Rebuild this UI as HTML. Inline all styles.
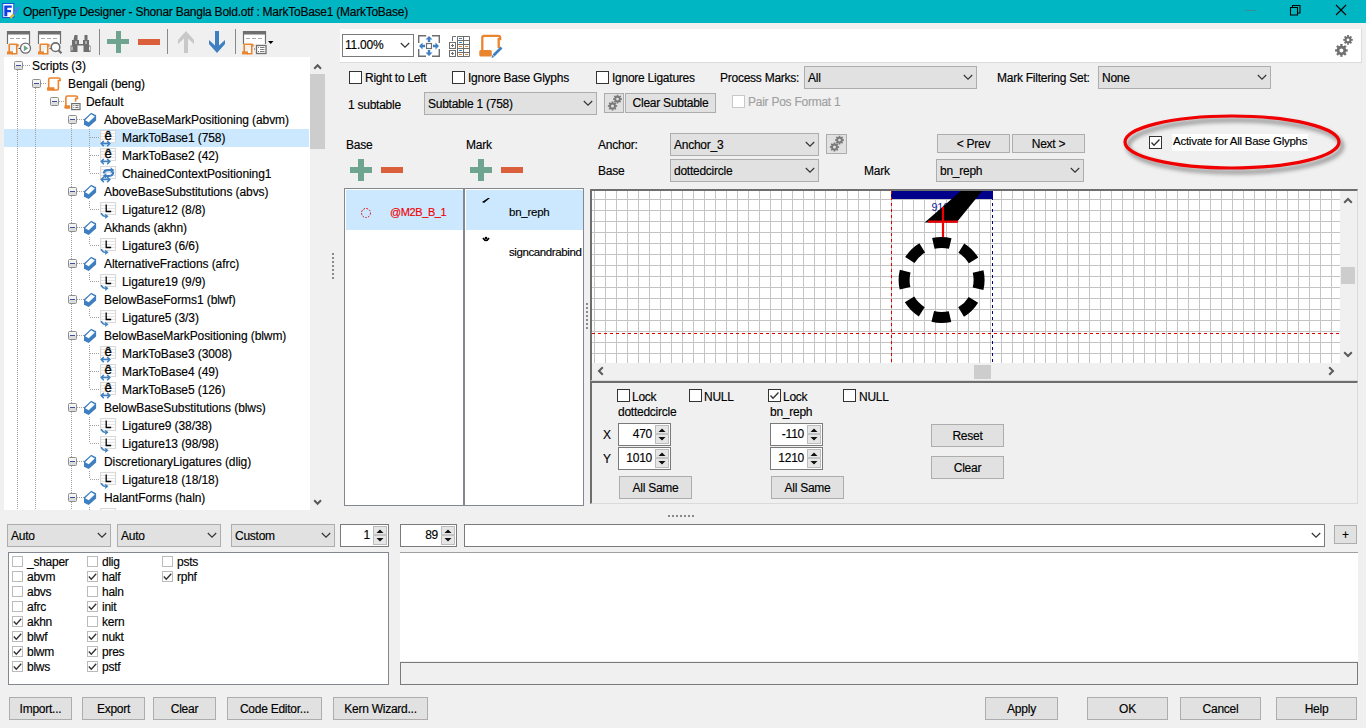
<!DOCTYPE html><html><head><meta charset="utf-8"><style>
html,body{margin:0;padding:0;width:1366px;height:728px;overflow:hidden;background:#f0f0f0;font-family:"Liberation Sans", sans-serif;font-size:12px;color:#000;position:relative}
.t{position:absolute;white-space:nowrap;line-height:16px;font-size:12px;letter-spacing:-0.25px;-webkit-text-stroke:0.15px currentColor}
</style></head><body>
<svg width="0" height="0" style="position:absolute"><defs>
<g id="exp"><rect x="0.5" y="0.5" width="8" height="8" rx="1" fill="#f4f4f4" stroke="#8e8e8e"/><rect x="1" y="5" width="7" height="3" fill="#dcdcdc"/><rect x="2" y="4" width="5" height="1" fill="#3b4fa0"/></g>
<g id="i_script"><path d="M2.7 14V4.5Q2.7 3 4.2 3H12.6Q14.2 3 14.2 4.5V5.5H12.4V13.5Q12.4 15 10.9 15H7" fill="none" stroke="#e9852f" stroke-width="1.6"/><rect x="1" y="12.3" width="7.5" height="3.4" rx="0.8" fill="#e9852f"/></g>
<g id="i_lang"><path d="M1.9 13V4.5Q1.9 3 3.4 3H11.6Q13.4 3 13.4 4.5V5.5H11.6V8.8" fill="none" stroke="#e9852f" stroke-width="1.6"/><rect x="0.4" y="12.3" width="5.8" height="3.4" rx="0.8" fill="#e9852f"/><rect x="7.7" y="10.6" width="8.3" height="6" fill="#fff" stroke="#6e6e6e" stroke-width="1.2"/><path d="M9.3 12.6h1M11.3 12.6h3.3M9.3 14.6h1M11.3 14.6h3.3" stroke="#6e6e6e" stroke-width="1"/></g>
<g id="i_feat"><path d="M7.2 1.8 L12.1 4.3 L12.1 9.5 L4.7 16 L0 13.7 L0 8.2Z" fill="#3d7fc0"/><path d="M7.2 3.3 L10.8 5.4 L4.7 11.3 L1.1 9.3Z" fill="#fff"/></g>
<g id="i_m2b"><rect x="0.6" y="1.6" width="15" height="11.8" fill="#fff"/><path d="M1 4.5h14.5M1 7.4h14.5M1 10.3h14.5" stroke="#e2e2e2"/><rect x="0.6" y="1.6" width="15" height="11.8" fill="none" stroke="#d6d6d6"/><text x="4.6" y="10.9" font-family="Liberation Sans" font-size="13" fill="#000" stroke="#000" stroke-width="0.35">ê</text><path d="M1.2 14.6h8.6 M3.8 12 L1.2 14.6 L3.8 17.2 M7.2 12 L9.8 14.6 L7.2 17.2" fill="none" stroke="#3d7fc0" stroke-width="1.5"/></g>
<g id="i_lig"><rect x="0.6" y="1.6" width="15" height="11.8" fill="#fff"/><path d="M1 4.5h14.5M1 7.4h14.5M1 10.3h14.5" stroke="#e2e2e2"/><rect x="0.6" y="1.6" width="15" height="11.8" fill="none" stroke="#d6d6d6"/><path d="M6.2 3.5v7h5" fill="none" stroke="#000" stroke-width="1.3"/><path d="M1.5 12 Q2 15.3 5.5 15.3" fill="none" stroke="#3d7fc0" stroke-width="1.6"/><path d="M8.5 15.3l-3.3-2.6v5.2z" fill="#3d7fc0"/></g>
<g id="i_chain"><rect x="0.6" y="1.6" width="15" height="11.8" fill="#fff"/><path d="M1 4.5h14.5M1 7.4h14.5M1 10.3h14.5" stroke="#e2e2e2"/><rect x="0.6" y="1.6" width="15" height="11.8" fill="none" stroke="#d6d6d6"/><path d="M4 8.5 Q4 5.2 8 5.2 H11" fill="none" stroke="#3d7fc0" stroke-width="2.2"/><path d="M14.3 5.2l-3.6-3v6z" fill="#3d7fc0"/><path d="M13 6.5 Q13.5 11 9 11 H6" fill="none" stroke="#3d7fc0" stroke-width="2.2"/><path d="M2.7 11l3.6-3v6z" fill="#3d7fc0"/><path d="M1.2 14.6h8.6 M3.8 12 L1.2 14.6 L3.8 17.2 M7.2 12 L9.8 14.6 L7.2 17.2" fill="none" stroke="#3d7fc0" stroke-width="1.5"/></g>
<g id="i_fit"><path d="M0.7 8V0.7h7.5M14 0.7h7.3v7.3M21.3 14v7.3H14M8 21.3H0.7V14" fill="none" stroke="#6e6e6e" stroke-width="1.4"/><rect x="8.5" y="8.5" width="5" height="5" fill="none" stroke="#6e6e6e" stroke-width="1.2"/><path d="M11 1l-3.5 3.5h2.3v2.5h2.4v-2.5h2.3z M11 21l-3.5-3.5h2.3v-2.5h2.4v2.5h2.3z M1 11l3.5-3.5v2.3h2.5v2.4h-2.5v2.3z M21 11l-3.5-3.5v2.3h-2.5v2.4h2.5v2.3z" fill="#3d7fc0"/></g>
<g id="i_grid"><path d="M4.5 6V1.5H8" fill="none" stroke="#6e6e6e" stroke-width="1"/><rect x="1.5" y="7.5" width="6" height="6" fill="#fff" stroke="#6e6e6e"/><rect x="1.5" y="15.5" width="6" height="6" fill="#fff" stroke="#6e6e6e"/><path d="M4.5 9v3M3 10.5h3M4.5 17v3M3 18.5h3" stroke="#6e6e6e" stroke-width="1"/><path d="M9.5 1.5h12v20h-12z M9.5 5.5h12M9.5 9.5h12M9.5 13.5h12M9.5 17.5h12M15.5 1.5v20" fill="none" stroke="#6e6e6e" stroke-width="1"/><path d="M11 3.5h3M11 7.5h3M11 15.5h3" stroke="#3d7fc0" stroke-width="1"/><path d="M11 11.5h3M17 11.5h3M11 19.5h3M17 19.5h3" stroke="#e9852f" stroke-width="1"/></g>
<g id="i_edit"><path d="M3.3 16.5V3.5Q3.3 1.8 5 1.8H19.2Q21.2 1.8 21.2 3.8V5.2H19.7V14" fill="none" stroke="#e9852f" stroke-width="2.3"/><rect x="0.3" y="16" width="12.5" height="6.5" rx="1.5" fill="#e9852f"/><path d="M14.5 21.5 L22.5 13.5" stroke="#3d7fc0" stroke-width="2.6"/><path d="M12.5 24 L13.2 21 L15.3 23.1Z" fill="#3d7fc0"/></g>
<g id="i_gears"><path d="M12.08 15.35 L13.68 15.14 L13.68 17.66 L12.08 17.45 L11.45 18.97 L12.73 19.95 L10.95 21.73 L9.97 20.45 L8.45 21.08 L8.66 22.68 L6.14 22.68 L6.35 21.08 L4.83 20.45 L3.85 21.73 L2.07 19.95 L3.35 18.97 L2.72 17.45 L1.12 17.66 L1.12 15.14 L2.72 15.35 L3.35 13.83 L2.07 12.85 L3.85 11.07 L4.83 12.35 L6.35 11.72 L6.14 10.12 L8.66 10.12 L8.45 11.72 L9.97 12.35 L10.95 11.07 L12.73 12.85 L11.45 13.83Z M9.4 16.4 A2.0 2.0 0 1 0 5.4 16.4 A2.0 2.0 0 1 0 9.4 16.4Z" fill="#707070" fill-rule="evenodd"/><path d="M17.51 5.11 L18.80 4.94 L18.80 6.86 L17.51 6.69 L17.04 7.83 L18.08 8.62 L16.72 9.98 L15.93 8.94 L14.79 9.41 L14.96 10.70 L13.04 10.70 L13.21 9.41 L12.07 8.94 L11.28 9.98 L9.92 8.62 L10.96 7.83 L10.49 6.69 L9.20 6.86 L9.20 4.94 L10.49 5.11 L10.96 3.97 L9.92 3.18 L11.28 1.82 L12.07 2.86 L13.21 2.39 L13.04 1.10 L14.96 1.10 L14.79 2.39 L15.93 2.86 L16.72 1.82 L18.08 3.18 L17.04 3.97Z M15.4 5.9 A1.4 1.4 0 1 0 12.6 5.9 A1.4 1.4 0 1 0 15.4 5.9Z" fill="#707070" fill-rule="evenodd"/></g>
<g id="i_gear2"><path d="M11.01 11.21 L12.11 11.08 L12.11 12.92 L11.01 12.79 L10.54 13.93 L11.41 14.61 L10.11 15.91 L9.43 15.04 L8.29 15.51 L8.42 16.61 L6.58 16.61 L6.71 15.51 L5.57 15.04 L4.89 15.91 L3.59 14.61 L4.46 13.93 L3.99 12.79 L2.89 12.92 L2.89 11.08 L3.99 11.21 L4.46 10.07 L3.59 9.39 L4.89 8.09 L5.57 8.96 L6.71 8.49 L6.58 7.39 L8.42 7.39 L8.29 8.49 L9.43 8.96 L10.11 8.09 L11.41 9.39 L10.54 10.07Z M9.0 12 A1.5 1.5 0 1 0 6.0 12 A1.5 1.5 0 1 0 9.0 12Z" fill="#7a7a7a" fill-rule="evenodd"/><path d="M15.82 4.36 L16.91 4.22 L16.91 5.98 L15.82 5.84 L15.37 6.92 L16.25 7.59 L14.99 8.85 L14.32 7.97 L13.24 8.42 L13.38 9.51 L11.62 9.51 L11.76 8.42 L10.68 7.97 L10.01 8.85 L8.75 7.59 L9.63 6.92 L9.18 5.84 L8.09 5.98 L8.09 4.22 L9.18 4.36 L9.63 3.28 L8.75 2.61 L10.01 1.35 L10.68 2.23 L11.76 1.78 L11.62 0.69 L13.38 0.69 L13.24 1.78 L14.32 2.23 L14.99 1.35 L16.25 2.61 L15.37 3.28Z M13.9 5.1 A1.4 1.4 0 1 0 11.1 5.1 A1.4 1.4 0 1 0 13.9 5.1Z" fill="#7a7a7a" fill-rule="evenodd"/></g>
<g id="i_win"><rect x="1.5" y="0.5" width="22" height="12.5" fill="#fff"/><path d="M1.5 13V0.5H23.5V13" fill="none" stroke="#6e6e6e" stroke-width="1.2"/><rect x="1" y="0" width="23" height="3.5" fill="#6e6e6e"/><path d="M4 7.5h4M10 7.5h4M16 7.5h4" stroke="#a8a8a8" stroke-width="1.1"/></g>
<g id="i_scroll"><path d="M2.2 1.2h7.5v1.5h1.2v-1.5 M2.2 1.2v8.5 M9.7 1.2v9.6h-5" fill="#fff" stroke="#e9852f" stroke-width="1.6"/><rect x="0" y="8.4" width="6" height="3" fill="#e9852f"/></g>
</defs></svg>
<div style="position:absolute;left:0px;top:0px;width:1366px;height:23px;background:#00b6c3"></div>
<svg style="position:absolute;left:2px;top:3px" width="18" height="16"><rect x="0.8" y="0.5" width="11" height="14" fill="#fff" stroke="#1a4fd8" stroke-width="1"/><path d="M2.3 2.5h7.5v2.2H5.3v2.3h3.7v2.2H5.3v4H2.3z" fill="#0b3fe0"/><path d="M9 14.5 L12 11 L17 4" stroke="#4a7fe8" stroke-width="2.2"/><path d="M8.5 15 L11.5 11.5" stroke="#e8c020" stroke-width="2.2"/></svg>
<div class="t" style="left:23px;top:4px;color:#000">OpenType Designer - Shonar Bangla Bold.otf : MarkToBase1 (MarkToBase)</div>
<div style="position:absolute;left:1245px;top:10px;width:11px;height:1px;background:#3a8c94"></div>
<svg style="position:absolute;left:1289px;top:4px" width="13" height="13" viewBox="0 0 13 13"><path d="M1.5 3.5h7v7.5h-7z M3.5 3.5V1.5h7.5v7.5H8.5" fill="none" stroke="#000" stroke-width="1.1"/></svg>
<svg style="position:absolute;left:1335px;top:4px" width="13" height="13" viewBox="0 0 13 13"><path d="M1 1L11 11M11 1L1 11" fill="none" stroke="#000" stroke-width="1.1"/></svg>
<svg style="position:absolute;left:6px;top:31px" width="26" height="24"><use href="#i_win"/><g transform="translate(1,12)"><use href="#i_scroll"/></g><path d="M12.5 17.5h2" stroke="#555"/><circle cx="19.5" cy="17.2" r="5" fill="#fff" stroke="#6e6e6e" stroke-width="1.3"/><path d="M17.8 14.3v6l4.6-3z" fill="#6ba58f"/></svg>
<svg style="position:absolute;left:37px;top:31px" width="26" height="24"><use href="#i_win"/><g transform="translate(1,12)"><use href="#i_scroll"/></g><path d="M12.5 17.5h2" stroke="#555"/><circle cx="18.5" cy="16.2" r="4.3" fill="#fff" stroke="#6e6e6e" stroke-width="1.6"/><path d="M21.5 19.3l3 3" stroke="#6e6e6e" stroke-width="2.2"/></svg>
<svg style="position:absolute;left:70px;top:34px" width="22" height="19"><path d="M4.5 1h3v5h1.5v4h4v-4h1.5v-5h3v5h1.5v5.5h1.5v6.5h-7v-6.5h-6v6.5h-7v-6.5h1.5v-5.5h1.5z" fill="#6e6e6e"/><path d="M2 12.5v4M19.5 12.5v4M6 7v3M16 7v3" stroke="#fff" stroke-width="0.9"/></svg>
<div style="position:absolute;left:99px;top:29px;width:1px;height:26px;background:#888"></div>
<svg style="position:absolute;left:177px;top:30px" width="18" height="24"><path d="M9 1 L17 10 L17 14 L11 8.5 V23 H7 V8.5 L1 14 L1 10 Z" fill="#c8c8c8"/></svg>
<svg style="position:absolute;left:208px;top:30px" width="18" height="24"><path d="M9 23 L17 14 L17 10 L11 15.5 V1 H7 V15.5 L1 10 L1 14 Z" fill="#3d7fc0"/></svg>
<svg style="position:absolute;left:242px;top:31px" width="34" height="24"><use href="#i_win"/><g transform="translate(0,12)"><use href="#i_scroll"/></g><path d="M12 18h1" stroke="#555"/><rect x="14.5" y="14.5" width="9.5" height="8" fill="#fff" stroke="#6e6e6e" stroke-width="1.3"/><path d="M16 16.5h1M18 16.5h4.5M18 18.5h4.5M16 20.5h1M18 20.5h4.5" stroke="#6e6e6e" stroke-width="0.9"/><path d="M26 10h5.5l-2.75 3z" fill="#000"/></svg>
<div style="position:absolute;left:107px;top:39px;width:22px;height:5px;background:#6fa590"></div>
<div style="position:absolute;left:115.5px;top:31px;width:5px;height:22px;background:#6fa590"></div>
<div style="position:absolute;left:138px;top:39px;width:22px;height:6px;background:#dc5f3c"></div>
<div style="position:absolute;left:167px;top:29px;width:1px;height:25px;background:#888"></div>
<div style="position:absolute;left:235px;top:29px;width:1px;height:25px;background:#888"></div>
<div style="position:absolute;left:4px;top:57px;width:306px;height:453px;background:#fff"></div>
<div style="position:absolute;left:310px;top:57px;width:16px;height:453px;background:#f0f0f0"></div>
<div style="position:absolute;left:4px;top:57px;width:306px;height:453px;overflow:hidden">
<div style="position:absolute;left:0px;top:72px;width:305px;height:18px;background:#cce8ff"></div>
<div style="position:absolute;left:13px;top:13px;width:1px;height:440px;background:repeating-linear-gradient(to bottom,#a0a0a0 0 1px,transparent 1px 2px)"></div>
<div style="position:absolute;left:31px;top:31px;width:1px;height:422px;background:repeating-linear-gradient(to bottom,#a0a0a0 0 1px,transparent 1px 2px)"></div>
<div style="position:absolute;left:67px;top:67px;width:1px;height:386px;background:repeating-linear-gradient(to bottom,#a0a0a0 0 1px,transparent 1px 2px)"></div>
<div style="position:absolute;left:19px;top:8px;width:8px;height:1px;background:repeating-linear-gradient(to right,#a0a0a0 0 1px,transparent 1px 2px)"></div>
<svg style="position:absolute;left:10px;top:4px" width="9" height="9"><use href="#exp"/></svg>
<div class="t" style="left:28px;top:1px;letter-spacing:-0.08px">Scripts (3)</div>
<div style="position:absolute;left:37px;top:26px;width:5px;height:1px;background:repeating-linear-gradient(to right,#a0a0a0 0 1px,transparent 1px 2px)"></div>
<svg style="position:absolute;left:28px;top:22px" width="9" height="9"><use href="#exp"/></svg>
<svg style="position:absolute;left:42px;top:18px" width="18" height="18"><use href="#i_script"/></svg>
<div class="t" style="left:64px;top:19px;letter-spacing:-0.08px">Bengali (beng)</div>
<div style="position:absolute;left:55px;top:44px;width:5px;height:1px;background:repeating-linear-gradient(to right,#a0a0a0 0 1px,transparent 1px 2px)"></div>
<svg style="position:absolute;left:46px;top:40px" width="9" height="9"><use href="#exp"/></svg>
<svg style="position:absolute;left:60px;top:36px" width="18" height="18"><use href="#i_lang"/></svg>
<div class="t" style="left:82px;top:37px;letter-spacing:-0.08px">Default</div>
<div style="position:absolute;left:73px;top:62px;width:7px;height:1px;background:repeating-linear-gradient(to right,#a0a0a0 0 1px,transparent 1px 2px)"></div>
<svg style="position:absolute;left:64px;top:58px" width="9" height="9"><use href="#exp"/></svg>
<svg style="position:absolute;left:80px;top:54px" width="18" height="18"><use href="#i_feat"/></svg>
<div class="t" style="left:100px;top:55px;letter-spacing:-0.08px">AboveBaseMarkPositioning (abvm)</div>
<div style="position:absolute;left:85px;top:72px;width:1px;height:18px;background:repeating-linear-gradient(to bottom,#a0a0a0 0 1px,transparent 1px 2px)"></div>
<div style="position:absolute;left:86px;top:80px;width:10px;height:1px;background:repeating-linear-gradient(to right,#a0a0a0 0 1px,transparent 1px 2px)"></div>
<svg style="position:absolute;left:96px;top:72px" width="18" height="18"><use href="#i_m2b"/></svg>
<div class="t" style="left:118px;top:73px;letter-spacing:-0.08px">MarkToBase1 (758)</div>
<div style="position:absolute;left:85px;top:90px;width:1px;height:18px;background:repeating-linear-gradient(to bottom,#a0a0a0 0 1px,transparent 1px 2px)"></div>
<div style="position:absolute;left:86px;top:98px;width:10px;height:1px;background:repeating-linear-gradient(to right,#a0a0a0 0 1px,transparent 1px 2px)"></div>
<svg style="position:absolute;left:96px;top:90px" width="18" height="18"><use href="#i_m2b"/></svg>
<div class="t" style="left:118px;top:91px;letter-spacing:-0.08px">MarkToBase2 (42)</div>
<div style="position:absolute;left:85px;top:108px;width:1px;height:8px;background:repeating-linear-gradient(to bottom,#a0a0a0 0 1px,transparent 1px 2px)"></div>
<div style="position:absolute;left:86px;top:116px;width:10px;height:1px;background:repeating-linear-gradient(to right,#a0a0a0 0 1px,transparent 1px 2px)"></div>
<svg style="position:absolute;left:96px;top:108px" width="18" height="18"><use href="#i_chain"/></svg>
<div class="t" style="left:118px;top:109px;letter-spacing:-0.08px">ChainedContextPositioning1</div>
<div style="position:absolute;left:73px;top:134px;width:7px;height:1px;background:repeating-linear-gradient(to right,#a0a0a0 0 1px,transparent 1px 2px)"></div>
<svg style="position:absolute;left:64px;top:130px" width="9" height="9"><use href="#exp"/></svg>
<svg style="position:absolute;left:80px;top:126px" width="18" height="18"><use href="#i_feat"/></svg>
<div class="t" style="left:100px;top:127px;letter-spacing:-0.08px">AboveBaseSubstitutions (abvs)</div>
<div style="position:absolute;left:85px;top:144px;width:1px;height:8px;background:repeating-linear-gradient(to bottom,#a0a0a0 0 1px,transparent 1px 2px)"></div>
<div style="position:absolute;left:86px;top:152px;width:10px;height:1px;background:repeating-linear-gradient(to right,#a0a0a0 0 1px,transparent 1px 2px)"></div>
<svg style="position:absolute;left:96px;top:144px" width="18" height="18"><use href="#i_lig"/></svg>
<div class="t" style="left:118px;top:145px;letter-spacing:-0.08px">Ligature12 (8/8)</div>
<div style="position:absolute;left:73px;top:170px;width:7px;height:1px;background:repeating-linear-gradient(to right,#a0a0a0 0 1px,transparent 1px 2px)"></div>
<svg style="position:absolute;left:64px;top:166px" width="9" height="9"><use href="#exp"/></svg>
<svg style="position:absolute;left:80px;top:162px" width="18" height="18"><use href="#i_feat"/></svg>
<div class="t" style="left:100px;top:163px;letter-spacing:-0.08px">Akhands (akhn)</div>
<div style="position:absolute;left:85px;top:180px;width:1px;height:8px;background:repeating-linear-gradient(to bottom,#a0a0a0 0 1px,transparent 1px 2px)"></div>
<div style="position:absolute;left:86px;top:188px;width:10px;height:1px;background:repeating-linear-gradient(to right,#a0a0a0 0 1px,transparent 1px 2px)"></div>
<svg style="position:absolute;left:96px;top:180px" width="18" height="18"><use href="#i_lig"/></svg>
<div class="t" style="left:118px;top:181px;letter-spacing:-0.08px">Ligature3 (6/6)</div>
<div style="position:absolute;left:73px;top:206px;width:7px;height:1px;background:repeating-linear-gradient(to right,#a0a0a0 0 1px,transparent 1px 2px)"></div>
<svg style="position:absolute;left:64px;top:202px" width="9" height="9"><use href="#exp"/></svg>
<svg style="position:absolute;left:80px;top:198px" width="18" height="18"><use href="#i_feat"/></svg>
<div class="t" style="left:100px;top:199px;letter-spacing:-0.08px">AlternativeFractions (afrc)</div>
<div style="position:absolute;left:85px;top:216px;width:1px;height:8px;background:repeating-linear-gradient(to bottom,#a0a0a0 0 1px,transparent 1px 2px)"></div>
<div style="position:absolute;left:86px;top:224px;width:10px;height:1px;background:repeating-linear-gradient(to right,#a0a0a0 0 1px,transparent 1px 2px)"></div>
<svg style="position:absolute;left:96px;top:216px" width="18" height="18"><use href="#i_lig"/></svg>
<div class="t" style="left:118px;top:217px;letter-spacing:-0.08px">Ligature19 (9/9)</div>
<div style="position:absolute;left:73px;top:242px;width:7px;height:1px;background:repeating-linear-gradient(to right,#a0a0a0 0 1px,transparent 1px 2px)"></div>
<svg style="position:absolute;left:64px;top:238px" width="9" height="9"><use href="#exp"/></svg>
<svg style="position:absolute;left:80px;top:234px" width="18" height="18"><use href="#i_feat"/></svg>
<div class="t" style="left:100px;top:235px;letter-spacing:-0.08px">BelowBaseForms1 (blwf)</div>
<div style="position:absolute;left:85px;top:252px;width:1px;height:8px;background:repeating-linear-gradient(to bottom,#a0a0a0 0 1px,transparent 1px 2px)"></div>
<div style="position:absolute;left:86px;top:260px;width:10px;height:1px;background:repeating-linear-gradient(to right,#a0a0a0 0 1px,transparent 1px 2px)"></div>
<svg style="position:absolute;left:96px;top:252px" width="18" height="18"><use href="#i_lig"/></svg>
<div class="t" style="left:118px;top:253px;letter-spacing:-0.08px">Ligature5 (3/3)</div>
<div style="position:absolute;left:73px;top:278px;width:7px;height:1px;background:repeating-linear-gradient(to right,#a0a0a0 0 1px,transparent 1px 2px)"></div>
<svg style="position:absolute;left:64px;top:274px" width="9" height="9"><use href="#exp"/></svg>
<svg style="position:absolute;left:80px;top:270px" width="18" height="18"><use href="#i_feat"/></svg>
<div class="t" style="left:100px;top:271px;letter-spacing:-0.08px">BelowBaseMarkPositioning (blwm)</div>
<div style="position:absolute;left:85px;top:288px;width:1px;height:18px;background:repeating-linear-gradient(to bottom,#a0a0a0 0 1px,transparent 1px 2px)"></div>
<div style="position:absolute;left:86px;top:296px;width:10px;height:1px;background:repeating-linear-gradient(to right,#a0a0a0 0 1px,transparent 1px 2px)"></div>
<svg style="position:absolute;left:96px;top:288px" width="18" height="18"><use href="#i_m2b"/></svg>
<div class="t" style="left:118px;top:289px;letter-spacing:-0.08px">MarkToBase3 (3008)</div>
<div style="position:absolute;left:85px;top:306px;width:1px;height:18px;background:repeating-linear-gradient(to bottom,#a0a0a0 0 1px,transparent 1px 2px)"></div>
<div style="position:absolute;left:86px;top:314px;width:10px;height:1px;background:repeating-linear-gradient(to right,#a0a0a0 0 1px,transparent 1px 2px)"></div>
<svg style="position:absolute;left:96px;top:306px" width="18" height="18"><use href="#i_m2b"/></svg>
<div class="t" style="left:118px;top:307px;letter-spacing:-0.08px">MarkToBase4 (49)</div>
<div style="position:absolute;left:85px;top:324px;width:1px;height:8px;background:repeating-linear-gradient(to bottom,#a0a0a0 0 1px,transparent 1px 2px)"></div>
<div style="position:absolute;left:86px;top:332px;width:10px;height:1px;background:repeating-linear-gradient(to right,#a0a0a0 0 1px,transparent 1px 2px)"></div>
<svg style="position:absolute;left:96px;top:324px" width="18" height="18"><use href="#i_m2b"/></svg>
<div class="t" style="left:118px;top:325px;letter-spacing:-0.08px">MarkToBase5 (126)</div>
<div style="position:absolute;left:73px;top:350px;width:7px;height:1px;background:repeating-linear-gradient(to right,#a0a0a0 0 1px,transparent 1px 2px)"></div>
<svg style="position:absolute;left:64px;top:346px" width="9" height="9"><use href="#exp"/></svg>
<svg style="position:absolute;left:80px;top:342px" width="18" height="18"><use href="#i_feat"/></svg>
<div class="t" style="left:100px;top:343px;letter-spacing:-0.08px">BelowBaseSubstitutions (blws)</div>
<div style="position:absolute;left:85px;top:360px;width:1px;height:18px;background:repeating-linear-gradient(to bottom,#a0a0a0 0 1px,transparent 1px 2px)"></div>
<div style="position:absolute;left:86px;top:368px;width:10px;height:1px;background:repeating-linear-gradient(to right,#a0a0a0 0 1px,transparent 1px 2px)"></div>
<svg style="position:absolute;left:96px;top:360px" width="18" height="18"><use href="#i_lig"/></svg>
<div class="t" style="left:118px;top:361px;letter-spacing:-0.08px">Ligature9 (38/38)</div>
<div style="position:absolute;left:85px;top:378px;width:1px;height:8px;background:repeating-linear-gradient(to bottom,#a0a0a0 0 1px,transparent 1px 2px)"></div>
<div style="position:absolute;left:86px;top:386px;width:10px;height:1px;background:repeating-linear-gradient(to right,#a0a0a0 0 1px,transparent 1px 2px)"></div>
<svg style="position:absolute;left:96px;top:378px" width="18" height="18"><use href="#i_lig"/></svg>
<div class="t" style="left:118px;top:379px;letter-spacing:-0.08px">Ligature13 (98/98)</div>
<div style="position:absolute;left:73px;top:404px;width:7px;height:1px;background:repeating-linear-gradient(to right,#a0a0a0 0 1px,transparent 1px 2px)"></div>
<svg style="position:absolute;left:64px;top:400px" width="9" height="9"><use href="#exp"/></svg>
<svg style="position:absolute;left:80px;top:396px" width="18" height="18"><use href="#i_feat"/></svg>
<div class="t" style="left:100px;top:397px;letter-spacing:-0.08px">DiscretionaryLigatures (dlig)</div>
<div style="position:absolute;left:85px;top:414px;width:1px;height:8px;background:repeating-linear-gradient(to bottom,#a0a0a0 0 1px,transparent 1px 2px)"></div>
<div style="position:absolute;left:86px;top:422px;width:10px;height:1px;background:repeating-linear-gradient(to right,#a0a0a0 0 1px,transparent 1px 2px)"></div>
<svg style="position:absolute;left:96px;top:414px" width="18" height="18"><use href="#i_lig"/></svg>
<div class="t" style="left:118px;top:415px;letter-spacing:-0.08px">Ligature18 (18/18)</div>
<div style="position:absolute;left:73px;top:440px;width:7px;height:1px;background:repeating-linear-gradient(to right,#a0a0a0 0 1px,transparent 1px 2px)"></div>
<svg style="position:absolute;left:64px;top:436px" width="9" height="9"><use href="#exp"/></svg>
<svg style="position:absolute;left:80px;top:432px" width="18" height="18"><use href="#i_feat"/></svg>
<div class="t" style="left:100px;top:433px;letter-spacing:-0.08px">HalantForms (haln)</div>
<div style="position:absolute;left:85px;top:450px;width:1px;height:8px;background:repeating-linear-gradient(to bottom,#a0a0a0 0 1px,transparent 1px 2px)"></div>
<div style="position:absolute;left:86px;top:458px;width:10px;height:1px;background:repeating-linear-gradient(to right,#a0a0a0 0 1px,transparent 1px 2px)"></div>
<svg style="position:absolute;left:96px;top:450px" width="18" height="18"><use href="#i_lig"/></svg>
</div>
<svg style="position:absolute;left:313px;top:63px" width="10" height="7"><path d="M1.2 5.8L4.6 2.2L8 5.8" fill="none" stroke="#5a5a5a" stroke-width="2"/></svg>
<div style="position:absolute;left:310px;top:74px;width:15px;height:75px;background:#cdcdcd"></div>
<svg style="position:absolute;left:313px;top:499px" width="10" height="7"><path d="M1.2 1.2L4.6 4.8L8 1.2" fill="none" stroke="#5a5a5a" stroke-width="2"/></svg>
<div style="position:absolute;left:340px;top:29px;width:1022px;height:34px;background:#fff;border-right:1px solid #dcdcdc;border-bottom:1px solid #dcdcdc;box-sizing:border-box"></div>
<div style="position:absolute;left:342px;top:34px;width:72px;height:23px;background:#fff;border:1px solid #7a7a7a;box-sizing:border-box"></div>
<div class="t" style="left:345px;top:37px;color:#000">11.00%</div>
<svg style="position:absolute;left:400px;top:42px" width="10" height="7" viewBox="0 0 10 7"><path d="M0.8 1 L5 5.2 L9.2 1" fill="none" stroke="#333" stroke-width="1.15"/></svg>
<svg style="position:absolute;left:418px;top:35px" width="23" height="23"><use href="#i_fit"/></svg>
<svg style="position:absolute;left:448px;top:35px" width="23" height="23"><use href="#i_grid"/></svg>
<svg style="position:absolute;left:479px;top:34px" width="25" height="25"><use href="#i_edit"/></svg>
<svg style="position:absolute;left:1334px;top:34px" width="22" height="24"><use href="#i_gears"/></svg>
<div style="position:absolute;left:349px;top:71px;width:13px;height:13px;background:#fff;border:1px solid #333;box-sizing:border-box"></div>
<div class="t" style="left:365px;top:70px;">Right to Left</div>
<div style="position:absolute;left:452px;top:71px;width:13px;height:13px;background:#fff;border:1px solid #333;box-sizing:border-box"></div>
<div class="t" style="left:468px;top:70px;">Ignore Base Glyphs</div>
<div style="position:absolute;left:596px;top:71px;width:13px;height:13px;background:#fff;border:1px solid #333;box-sizing:border-box"></div>
<div class="t" style="left:612px;top:70px;">Ignore Ligatures</div>
<div class="t" style="left:720px;top:70px;">Process Marks:</div>
<div style="position:absolute;left:804px;top:66px;width:173px;height:23px;background:#e1e1e1;border:1px solid #adadad;box-sizing:border-box"></div>
<div class="t" style="left:808px;top:70px;color:#000">All</div>
<svg style="position:absolute;left:963px;top:74px" width="10" height="7" viewBox="0 0 10 7"><path d="M0.8 1 L5 5.2 L9.2 1" fill="none" stroke="#333" stroke-width="1.15"/></svg>
<div class="t" style="left:997px;top:70px;">Mark Filtering Set:</div>
<div style="position:absolute;left:1098px;top:66px;width:173px;height:23px;background:#e1e1e1;border:1px solid #adadad;box-sizing:border-box"></div>
<div class="t" style="left:1102px;top:70px;color:#000">None</div>
<svg style="position:absolute;left:1257px;top:74px" width="10" height="7" viewBox="0 0 10 7"><path d="M0.8 1 L5 5.2 L9.2 1" fill="none" stroke="#333" stroke-width="1.15"/></svg>
<div class="t" style="left:348px;top:97px;">1 subtable</div>
<div style="position:absolute;left:424px;top:92px;width:173px;height:23px;background:#e1e1e1;border:1px solid #adadad;box-sizing:border-box"></div>
<div class="t" style="left:428px;top:96px;color:#000">Subtable 1 (758)</div>
<svg style="position:absolute;left:583px;top:100px" width="10" height="7" viewBox="0 0 10 7"><path d="M0.8 1 L5 5.2 L9.2 1" fill="none" stroke="#333" stroke-width="1.15"/></svg>
<div style="position:absolute;left:604px;top:93px;width:20px;height:20px;background:#e1e1e1;border:1px solid #adadad;box-sizing:border-box"></div>
<svg style="position:absolute;left:605px;top:94px" width="18" height="18"><use href="#i_gear2"/></svg>
<div style="position:absolute;left:625px;top:93px;width:91px;height:20px;background:#e1e1e1;border:1px solid #adadad;box-sizing:border-box"></div>
<div class="t" style="left:625px;top:95px;width:91px;text-align:center">Clear Subtable</div>
<div style="position:absolute;left:732px;top:95px;width:13px;height:13px;background:#fff;border:1px solid #c8c8c8;box-sizing:border-box"></div>
<div class="t" style="left:748px;top:94px;color:#a0a0a0">Pair Pos Format 1</div>
<div class="t" style="left:346px;top:137px;">Base</div>
<div class="t" style="left:466px;top:137px;">Mark</div>
<div style="position:absolute;left:350px;top:167px;width:22px;height:6px;background:#6fa590"></div>
<div style="position:absolute;left:358px;top:159px;width:6px;height:22px;background:#6fa590"></div>
<div style="position:absolute;left:381px;top:167px;width:22px;height:6px;background:#dc5f3c"></div>
<div style="position:absolute;left:470px;top:167px;width:22px;height:6px;background:#6fa590"></div>
<div style="position:absolute;left:478px;top:159px;width:6px;height:22px;background:#6fa590"></div>
<div style="position:absolute;left:501px;top:167px;width:22px;height:6px;background:#dc5f3c"></div>
<div style="position:absolute;left:344px;top:188px;width:120px;height:318px;background:#fff;border:1px solid #828790;box-sizing:border-box"></div>
<div style="position:absolute;left:464px;top:188px;width:120px;height:318px;background:#fff;border:1px solid #828790;box-sizing:border-box"></div>
<div style="position:absolute;left:346px;top:190px;width:117px;height:40px;background:#cce8ff"></div>
<div style="position:absolute;left:466px;top:190px;width:117px;height:40px;background:#cce8ff"></div>
<svg style="position:absolute;left:360px;top:207px" width="12" height="12"><circle cx="6" cy="6" r="4.5" fill="none" stroke="#e00000" stroke-width="1" stroke-dasharray="1.6 1.4"/></svg>
<div class="t" style="left:390px;top:204px;color:#f00000;font-size:11px;letter-spacing:-0.4px">@M2B_B_1</div>
<svg style="position:absolute;left:481px;top:196px" width="10" height="8"><path d="M1 6 L7 2 L9 2 L3 7Z" fill="#000"/></svg>
<div class="t" style="left:509px;top:204px;font-size:11.5px">bn_reph</div>
<svg style="position:absolute;left:481px;top:234px" width="10" height="10"><path d="M2 4 Q5 9 8 4" fill="none" stroke="#000" stroke-width="1.6"/><circle cx="5" cy="4" r="1.3" fill="#000"/></svg>
<div class="t" style="left:509px;top:244px;font-size:11.5px;letter-spacing:-0.4px;width:73px;overflow:hidden">signcandrabind</div>
<div class="t" style="left:598px;top:137px;">Anchor:</div>
<div style="position:absolute;left:670px;top:133px;width:149px;height:23px;background:#e1e1e1;border:1px solid #adadad;box-sizing:border-box"></div>
<div class="t" style="left:674px;top:137px;color:#000">Anchor_3</div>
<svg style="position:absolute;left:805px;top:141px" width="10" height="7" viewBox="0 0 10 7"><path d="M0.8 1 L5 5.2 L9.2 1" fill="none" stroke="#333" stroke-width="1.15"/></svg>
<div style="position:absolute;left:826px;top:134px;width:21px;height:20px;background:#e1e1e1;border:1px solid #adadad;box-sizing:border-box"></div>
<svg style="position:absolute;left:827px;top:135px" width="18" height="18"><use href="#i_gear2"/></svg>
<div style="position:absolute;left:937px;top:134px;width:73px;height:19px;background:#e1e1e1;border:1px solid #adadad;box-sizing:border-box"></div>
<div class="t" style="left:937px;top:136px;width:73px;text-align:center">&lt; Prev</div>
<div style="position:absolute;left:1012px;top:134px;width:73px;height:19px;background:#e1e1e1;border:1px solid #adadad;box-sizing:border-box"></div>
<div class="t" style="left:1012px;top:136px;width:73px;text-align:center">Next &gt;</div>
<div class="t" style="left:598px;top:163px;">Base</div>
<div style="position:absolute;left:670px;top:159px;width:149px;height:23px;background:#e1e1e1;border:1px solid #adadad;box-sizing:border-box"></div>
<div class="t" style="left:674px;top:163px;color:#000">dottedcircle</div>
<svg style="position:absolute;left:805px;top:167px" width="10" height="7" viewBox="0 0 10 7"><path d="M0.8 1 L5 5.2 L9.2 1" fill="none" stroke="#333" stroke-width="1.15"/></svg>
<div class="t" style="left:864px;top:163px;">Mark</div>
<div style="position:absolute;left:936px;top:159px;width:148px;height:23px;background:#e1e1e1;border:1px solid #adadad;box-sizing:border-box"></div>
<div class="t" style="left:940px;top:163px;color:#000">bn_reph</div>
<svg style="position:absolute;left:1070px;top:167px" width="10" height="7" viewBox="0 0 10 7"><path d="M0.8 1 L5 5.2 L9.2 1" fill="none" stroke="#333" stroke-width="1.15"/></svg>
<div style="position:absolute;left:1149px;top:136px;width:13px;height:13px;background:#fff;border:1px solid #333;box-sizing:border-box"></div>
<svg style="position:absolute;left:1149px;top:136px" width="13" height="13" viewBox="0 0 13 13"><path d="M2.5 6.5 L5 9.2 L10.5 3.5" fill="none" stroke="#333" stroke-width="1.35"/></svg>
<div style="position:absolute;left:1172px;top:134px;width:136px;height:17px;background:#fff"></div>
<div class="t" style="left:1173px;top:133px;font-size:11.5px">Activate for All Base Glyphs</div>
<svg style="position:absolute;left:1115px;top:108px" width="240" height="72"><defs><filter id="sh" x="-10%" y="-30%" width="120%" height="160%"><feGaussianBlur stdDeviation="2"/></filter></defs><ellipse cx="118" cy="36" rx="107" ry="26" fill="none" stroke="#777" stroke-width="4" filter="url(#sh)" opacity="0.8" transform="translate(2,2)"/><ellipse cx="117" cy="34" rx="107" ry="26" fill="none" stroke="#f00000" stroke-width="3.2"/></svg>
<div style="position:absolute;left:590px;top:189px;width:768px;height:192px;border-top:2px solid #6e6e6e;border-left:2px solid #6e6e6e;border-right:1px solid #dadada;border-bottom:1px solid #dadada;box-sizing:border-box;background:#f0f0f0"></div>
<div style="position:absolute;left:592px;top:191px;width:748px;height:172px;overflow:hidden;background:#fff">
<svg style="position:absolute;left:0;top:0" width="748" height="172"><path d="M2.5 0V172M13.5 0V172M24.5 0V172M35.5 0V172M46.5 0V172M57.5 0V172M68.5 0V172M79.5 0V172M90.5 0V172M101.5 0V172M112.5 0V172M123.5 0V172M134.5 0V172M145.5 0V172M156.5 0V172M167.5 0V172M178.5 0V172M189.5 0V172M200.5 0V172M211.5 0V172M222.5 0V172M233.5 0V172M244.5 0V172M255.5 0V172M266.5 0V172M277.5 0V172M288.5 0V172M299.5 0V172M310.5 0V172M321.5 0V172M332.5 0V172M343.5 0V172M354.5 0V172M365.5 0V172M376.5 0V172M387.5 0V172M398.5 0V172M409.5 0V172M420.5 0V172M431.5 0V172M442.5 0V172M453.5 0V172M464.5 0V172M475.5 0V172M486.5 0V172M497.5 0V172M508.5 0V172M519.5 0V172M530.5 0V172M541.5 0V172M552.5 0V172M563.5 0V172M574.5 0V172M585.5 0V172M596.5 0V172M607.5 0V172M618.5 0V172M629.5 0V172M640.5 0V172M651.5 0V172M662.5 0V172M673.5 0V172M684.5 0V172M695.5 0V172M706.5 0V172M717.5 0V172M728.5 0V172M739.5 0V172M0 8.5H748M0 19.5H748M0 30.5H748M0 41.5H748M0 52.5H748M0 63.5H748M0 74.5H748M0 85.5H748M0 96.5H748M0 107.5H748M0 118.5H748M0 129.5H748M0 140.5H748M0 151.5H748M0 162.5H748" stroke="#c4c4c4" stroke-width="1" fill="none"/><text x="339.5" y="20" font-family="Liberation Sans" font-size="11" fill="#1a1a9a" letter-spacing="-0.3">910</text><rect x="299" y="0" width="102" height="8" fill="#00008b"/><path d="M299.5 0V172" stroke="#e00000" stroke-dasharray="3 3"/><path d="M400.5 0V172" stroke="#00008b" stroke-dasharray="3 3"/><path d="M0 142.5H748" stroke="#e00000" stroke-dasharray="3 3"/><path d="M332.6 31.5 L364.5 31.5 L391 -1 L370 -1Z" fill="#000"/><circle cx="349.6" cy="89" r="37.5" fill="none" stroke="#000" stroke-width="11" stroke-dasharray="17.45 12" stroke-dashoffset="8.7" transform="rotate(-90 349.6 89)"/><path d="M336 30.69999999999999H366 M351 16V46" stroke="#f00000" stroke-width="2.2"/></svg>
</div>
<svg style="position:absolute;left:1343px;top:197px" width="10" height="7"><path d="M1.2 5.8L5 2L8.8 5.8" fill="none" stroke="#5a5a5a" stroke-width="2"/></svg>
<svg style="position:absolute;left:1343px;top:351px" width="10" height="7"><path d="M1.2 1.2L5 5L8.8 1.2" fill="none" stroke="#5a5a5a" stroke-width="2"/></svg>
<div style="position:absolute;left:1341px;top:267px;width:14px;height:17px;background:#cdcdcd"></div>
<svg style="position:absolute;left:597px;top:366px" width="7" height="10"><path d="M5.8 1.2L2 5L5.8 8.8" fill="none" stroke="#5a5a5a" stroke-width="2"/></svg>
<svg style="position:absolute;left:1328px;top:366px" width="7" height="10"><path d="M1.2 1.2L5 5L1.2 8.8" fill="none" stroke="#5a5a5a" stroke-width="2"/></svg>
<div style="position:absolute;left:974px;top:365px;width:17px;height:14px;background:#cdcdcd"></div>
<div style="position:absolute;left:590px;top:381px;width:768px;height:123px;border:1px solid #dadada;border-top:2px solid #6e6e6e;border-left:2px solid #6e6e6e;box-sizing:border-box"></div>
<div style="position:absolute;left:617px;top:389px;width:13px;height:13px;background:#fff;border:1px solid #333;box-sizing:border-box"></div>
<div class="t" style="left:632px;top:389px;">Lock</div>
<div style="position:absolute;left:689px;top:389px;width:13px;height:13px;background:#fff;border:1px solid #333;box-sizing:border-box"></div>
<div class="t" style="left:704px;top:389px;">NULL</div>
<div class="t" style="left:618px;top:404px;">dottedcircle</div>
<div class="t" style="left:603px;top:427px;">X</div>
<div class="t" style="left:603px;top:451px;">Y</div>
<div style="position:absolute;left:618px;top:423px;width:53px;height:23px;background:#fff;border:1px solid #7a7a7a;box-sizing:border-box"></div>
<div class="t" style="left:618px;top:426px;width:34px;text-align:right">470</div>
<div style="position:absolute;left:655px;top:425px;width:14px;height:19px;background:#e6e6e6;border:1px solid #bcbcbc;box-sizing:border-box"></div>
<div style="position:absolute;left:655px;top:433px;width:14px;height:2px;background:#c4c4c4"></div>
<svg style="position:absolute;left:655px;top:425px" width="14" height="19" viewBox="0 0 14 19"><path d="M3.5 7.0 L7 3.5 L10.5 7.0Z M3.5 12.0 L7 15.5 L10.5 12.0Z" fill="#111"/></svg>
<div style="position:absolute;left:618px;top:447px;width:53px;height:23px;background:#fff;border:1px solid #7a7a7a;box-sizing:border-box"></div>
<div class="t" style="left:618px;top:450px;width:34px;text-align:right">1010</div>
<div style="position:absolute;left:655px;top:449px;width:14px;height:19px;background:#e6e6e6;border:1px solid #bcbcbc;box-sizing:border-box"></div>
<div style="position:absolute;left:655px;top:457px;width:14px;height:2px;background:#c4c4c4"></div>
<svg style="position:absolute;left:655px;top:449px" width="14" height="19" viewBox="0 0 14 19"><path d="M3.5 7.0 L7 3.5 L10.5 7.0Z M3.5 12.0 L7 15.5 L10.5 12.0Z" fill="#111"/></svg>
<div style="position:absolute;left:619px;top:476px;width:73px;height:23px;background:#e1e1e1;border:1px solid #adadad;box-sizing:border-box"></div>
<div class="t" style="left:619px;top:480px;width:73px;text-align:center">All Same</div>
<div style="position:absolute;left:768px;top:389px;width:13px;height:13px;background:#fff;border:1px solid #333;box-sizing:border-box"></div>
<svg style="position:absolute;left:768px;top:389px" width="13" height="13" viewBox="0 0 13 13"><path d="M2.5 6.5 L5 9.2 L10.5 3.5" fill="none" stroke="#333" stroke-width="1.35"/></svg>
<div class="t" style="left:783px;top:389px;">Lock</div>
<div style="position:absolute;left:843px;top:389px;width:13px;height:13px;background:#fff;border:1px solid #333;box-sizing:border-box"></div>
<div class="t" style="left:859px;top:389px;">NULL</div>
<div class="t" style="left:770px;top:404px;">bn_reph</div>
<div style="position:absolute;left:770px;top:423px;width:53px;height:23px;background:#fff;border:1px solid #7a7a7a;box-sizing:border-box"></div>
<div class="t" style="left:770px;top:426px;width:34px;text-align:right">-110</div>
<div style="position:absolute;left:807px;top:425px;width:14px;height:19px;background:#e6e6e6;border:1px solid #bcbcbc;box-sizing:border-box"></div>
<div style="position:absolute;left:807px;top:433px;width:14px;height:2px;background:#c4c4c4"></div>
<svg style="position:absolute;left:807px;top:425px" width="14" height="19" viewBox="0 0 14 19"><path d="M3.5 7.0 L7 3.5 L10.5 7.0Z M3.5 12.0 L7 15.5 L10.5 12.0Z" fill="#111"/></svg>
<div style="position:absolute;left:770px;top:447px;width:53px;height:23px;background:#fff;border:1px solid #7a7a7a;box-sizing:border-box"></div>
<div class="t" style="left:770px;top:450px;width:34px;text-align:right">1210</div>
<div style="position:absolute;left:807px;top:449px;width:14px;height:19px;background:#e6e6e6;border:1px solid #bcbcbc;box-sizing:border-box"></div>
<div style="position:absolute;left:807px;top:457px;width:14px;height:2px;background:#c4c4c4"></div>
<svg style="position:absolute;left:807px;top:449px" width="14" height="19" viewBox="0 0 14 19"><path d="M3.5 7.0 L7 3.5 L10.5 7.0Z M3.5 12.0 L7 15.5 L10.5 12.0Z" fill="#111"/></svg>
<div style="position:absolute;left:771px;top:476px;width:73px;height:23px;background:#e1e1e1;border:1px solid #adadad;box-sizing:border-box"></div>
<div class="t" style="left:771px;top:480px;width:73px;text-align:center">All Same</div>
<div style="position:absolute;left:931px;top:424px;width:73px;height:23px;background:#e1e1e1;border:1px solid #adadad;box-sizing:border-box"></div>
<div class="t" style="left:931px;top:428px;width:73px;text-align:center">Reset</div>
<div style="position:absolute;left:931px;top:456px;width:73px;height:23px;background:#e1e1e1;border:1px solid #adadad;box-sizing:border-box"></div>
<div class="t" style="left:931px;top:460px;width:73px;text-align:center">Clear</div>
<div style="position:absolute;left:668px;top:515px;width:2px;height:2px;background:#8a8a8a"></div>
<div style="position:absolute;left:332px;top:253px;width:2px;height:2px;background:#8a8a8a"></div>
<div style="position:absolute;left:586px;top:303px;width:2px;height:2px;background:#8a8a8a"></div>
<div style="position:absolute;left:672px;top:515px;width:2px;height:2px;background:#8a8a8a"></div>
<div style="position:absolute;left:332px;top:257px;width:2px;height:2px;background:#8a8a8a"></div>
<div style="position:absolute;left:586px;top:307px;width:2px;height:2px;background:#8a8a8a"></div>
<div style="position:absolute;left:676px;top:515px;width:2px;height:2px;background:#8a8a8a"></div>
<div style="position:absolute;left:332px;top:261px;width:2px;height:2px;background:#8a8a8a"></div>
<div style="position:absolute;left:586px;top:311px;width:2px;height:2px;background:#8a8a8a"></div>
<div style="position:absolute;left:680px;top:515px;width:2px;height:2px;background:#8a8a8a"></div>
<div style="position:absolute;left:332px;top:265px;width:2px;height:2px;background:#8a8a8a"></div>
<div style="position:absolute;left:586px;top:315px;width:2px;height:2px;background:#8a8a8a"></div>
<div style="position:absolute;left:684px;top:515px;width:2px;height:2px;background:#8a8a8a"></div>
<div style="position:absolute;left:332px;top:269px;width:2px;height:2px;background:#8a8a8a"></div>
<div style="position:absolute;left:586px;top:319px;width:2px;height:2px;background:#8a8a8a"></div>
<div style="position:absolute;left:688px;top:515px;width:2px;height:2px;background:#8a8a8a"></div>
<div style="position:absolute;left:332px;top:273px;width:2px;height:2px;background:#8a8a8a"></div>
<div style="position:absolute;left:586px;top:323px;width:2px;height:2px;background:#8a8a8a"></div>
<div style="position:absolute;left:692px;top:515px;width:2px;height:2px;background:#8a8a8a"></div>
<div style="position:absolute;left:332px;top:277px;width:2px;height:2px;background:#8a8a8a"></div>
<div style="position:absolute;left:586px;top:327px;width:2px;height:2px;background:#8a8a8a"></div>
<div style="position:absolute;left:7px;top:524px;width:104px;height:23px;background:#e1e1e1;border:1px solid #adadad;box-sizing:border-box"></div>
<div class="t" style="left:11px;top:528px;color:#000">Auto</div>
<svg style="position:absolute;left:97px;top:532px" width="10" height="7" viewBox="0 0 10 7"><path d="M0.8 1 L5 5.2 L9.2 1" fill="none" stroke="#333" stroke-width="1.15"/></svg>
<div style="position:absolute;left:117px;top:524px;width:104px;height:23px;background:#e1e1e1;border:1px solid #adadad;box-sizing:border-box"></div>
<div class="t" style="left:121px;top:528px;color:#000">Auto</div>
<svg style="position:absolute;left:207px;top:532px" width="10" height="7" viewBox="0 0 10 7"><path d="M0.8 1 L5 5.2 L9.2 1" fill="none" stroke="#333" stroke-width="1.15"/></svg>
<div style="position:absolute;left:231px;top:524px;width:104px;height:23px;background:#e1e1e1;border:1px solid #adadad;box-sizing:border-box"></div>
<div class="t" style="left:235px;top:528px;color:#000">Custom</div>
<svg style="position:absolute;left:321px;top:532px" width="10" height="7" viewBox="0 0 10 7"><path d="M0.8 1 L5 5.2 L9.2 1" fill="none" stroke="#333" stroke-width="1.15"/></svg>
<div style="position:absolute;left:340px;top:524px;width:49px;height:23px;background:#fff;border:1px solid #7a7a7a;box-sizing:border-box"></div>
<div class="t" style="left:340px;top:527px;width:30px;text-align:right">1</div>
<div style="position:absolute;left:373px;top:526px;width:14px;height:19px;background:#e6e6e6;border:1px solid #bcbcbc;box-sizing:border-box"></div>
<div style="position:absolute;left:373px;top:534px;width:14px;height:2px;background:#c4c4c4"></div>
<svg style="position:absolute;left:373px;top:526px" width="14" height="19" viewBox="0 0 14 19"><path d="M3.5 7.0 L7 3.5 L10.5 7.0Z M3.5 12.0 L7 15.5 L10.5 12.0Z" fill="#111"/></svg>
<div style="position:absolute;left:400px;top:524px;width:57px;height:23px;background:#fff;border:1px solid #7a7a7a;box-sizing:border-box"></div>
<div class="t" style="left:400px;top:527px;width:38px;text-align:right">89</div>
<div style="position:absolute;left:441px;top:526px;width:14px;height:19px;background:#e6e6e6;border:1px solid #bcbcbc;box-sizing:border-box"></div>
<div style="position:absolute;left:441px;top:534px;width:14px;height:2px;background:#c4c4c4"></div>
<svg style="position:absolute;left:441px;top:526px" width="14" height="19" viewBox="0 0 14 19"><path d="M3.5 7.0 L7 3.5 L10.5 7.0Z M3.5 12.0 L7 15.5 L10.5 12.0Z" fill="#111"/></svg>
<div style="position:absolute;left:464px;top:524px;width:861px;height:23px;background:#fff;border:1px solid #7a7a7a;box-sizing:border-box"></div>
<svg style="position:absolute;left:1311px;top:532px" width="10" height="7" viewBox="0 0 10 7"><path d="M0.8 1 L5 5.2 L9.2 1" fill="none" stroke="#333" stroke-width="1.15"/></svg>
<div style="position:absolute;left:1334px;top:525px;width:23px;height:19px;background:#e1e1e1;border:1px solid #adadad;box-sizing:border-box"></div>
<div class="t" style="left:1334px;top:527px;width:23px;text-align:center">+</div>
<div style="position:absolute;left:8px;top:552px;width:381px;height:133px;background:#fff;border:1px solid #828790;box-sizing:border-box"></div>
<div style="position:absolute;left:12px;top:556px;width:11px;height:11px;background:#fff;border:1px solid #bbb;box-sizing:border-box"></div>
<div class="t" style="left:27px;top:554px;">_shaper</div>
<div style="position:absolute;left:12px;top:571px;width:11px;height:11px;background:#fff;border:1px solid #bbb;box-sizing:border-box"></div>
<div class="t" style="left:27px;top:569px;">abvm</div>
<div style="position:absolute;left:12px;top:586px;width:11px;height:11px;background:#fff;border:1px solid #bbb;box-sizing:border-box"></div>
<div class="t" style="left:27px;top:584px;">abvs</div>
<div style="position:absolute;left:12px;top:601px;width:11px;height:11px;background:#fff;border:1px solid #bbb;box-sizing:border-box"></div>
<div class="t" style="left:27px;top:599px;">afrc</div>
<div style="position:absolute;left:12px;top:616px;width:11px;height:11px;background:#fff;border:1px solid #bbb;box-sizing:border-box"></div>
<svg style="position:absolute;left:12px;top:616px" width="11" height="11"><path d="M1.8 5.5L4.3 8.2L9.2 2.8" fill="none" stroke="#333" stroke-width="1.35"/></svg>
<div class="t" style="left:27px;top:614px;">akhn</div>
<div style="position:absolute;left:12px;top:631px;width:11px;height:11px;background:#fff;border:1px solid #bbb;box-sizing:border-box"></div>
<svg style="position:absolute;left:12px;top:631px" width="11" height="11"><path d="M1.8 5.5L4.3 8.2L9.2 2.8" fill="none" stroke="#333" stroke-width="1.35"/></svg>
<div class="t" style="left:27px;top:629px;">blwf</div>
<div style="position:absolute;left:12px;top:646px;width:11px;height:11px;background:#fff;border:1px solid #bbb;box-sizing:border-box"></div>
<svg style="position:absolute;left:12px;top:646px" width="11" height="11"><path d="M1.8 5.5L4.3 8.2L9.2 2.8" fill="none" stroke="#333" stroke-width="1.35"/></svg>
<div class="t" style="left:27px;top:644px;">blwm</div>
<div style="position:absolute;left:12px;top:661px;width:11px;height:11px;background:#fff;border:1px solid #bbb;box-sizing:border-box"></div>
<svg style="position:absolute;left:12px;top:661px" width="11" height="11"><path d="M1.8 5.5L4.3 8.2L9.2 2.8" fill="none" stroke="#333" stroke-width="1.35"/></svg>
<div class="t" style="left:27px;top:659px;">blws</div>
<div style="position:absolute;left:87px;top:556px;width:11px;height:11px;background:#fff;border:1px solid #bbb;box-sizing:border-box"></div>
<div class="t" style="left:102px;top:554px;">dlig</div>
<div style="position:absolute;left:87px;top:571px;width:11px;height:11px;background:#fff;border:1px solid #bbb;box-sizing:border-box"></div>
<svg style="position:absolute;left:87px;top:571px" width="11" height="11"><path d="M1.8 5.5L4.3 8.2L9.2 2.8" fill="none" stroke="#333" stroke-width="1.35"/></svg>
<div class="t" style="left:102px;top:569px;">half</div>
<div style="position:absolute;left:87px;top:586px;width:11px;height:11px;background:#fff;border:1px solid #bbb;box-sizing:border-box"></div>
<div class="t" style="left:102px;top:584px;">haln</div>
<div style="position:absolute;left:87px;top:601px;width:11px;height:11px;background:#fff;border:1px solid #bbb;box-sizing:border-box"></div>
<svg style="position:absolute;left:87px;top:601px" width="11" height="11"><path d="M1.8 5.5L4.3 8.2L9.2 2.8" fill="none" stroke="#333" stroke-width="1.35"/></svg>
<div class="t" style="left:102px;top:599px;">init</div>
<div style="position:absolute;left:87px;top:616px;width:11px;height:11px;background:#fff;border:1px solid #bbb;box-sizing:border-box"></div>
<div class="t" style="left:102px;top:614px;">kern</div>
<div style="position:absolute;left:87px;top:631px;width:11px;height:11px;background:#fff;border:1px solid #bbb;box-sizing:border-box"></div>
<svg style="position:absolute;left:87px;top:631px" width="11" height="11"><path d="M1.8 5.5L4.3 8.2L9.2 2.8" fill="none" stroke="#333" stroke-width="1.35"/></svg>
<div class="t" style="left:102px;top:629px;">nukt</div>
<div style="position:absolute;left:87px;top:646px;width:11px;height:11px;background:#fff;border:1px solid #bbb;box-sizing:border-box"></div>
<svg style="position:absolute;left:87px;top:646px" width="11" height="11"><path d="M1.8 5.5L4.3 8.2L9.2 2.8" fill="none" stroke="#333" stroke-width="1.35"/></svg>
<div class="t" style="left:102px;top:644px;">pres</div>
<div style="position:absolute;left:87px;top:661px;width:11px;height:11px;background:#fff;border:1px solid #bbb;box-sizing:border-box"></div>
<svg style="position:absolute;left:87px;top:661px" width="11" height="11"><path d="M1.8 5.5L4.3 8.2L9.2 2.8" fill="none" stroke="#333" stroke-width="1.35"/></svg>
<div class="t" style="left:102px;top:659px;">pstf</div>
<div style="position:absolute;left:162px;top:556px;width:11px;height:11px;background:#fff;border:1px solid #bbb;box-sizing:border-box"></div>
<div class="t" style="left:177px;top:554px;">psts</div>
<div style="position:absolute;left:162px;top:571px;width:11px;height:11px;background:#fff;border:1px solid #bbb;box-sizing:border-box"></div>
<svg style="position:absolute;left:162px;top:571px" width="11" height="11"><path d="M1.8 5.5L4.3 8.2L9.2 2.8" fill="none" stroke="#333" stroke-width="1.35"/></svg>
<div class="t" style="left:177px;top:569px;">rphf</div>
<div style="position:absolute;left:400px;top:552px;width:958px;height:109px;background:#fff;border-top:1px solid #a0a0a0;box-sizing:border-box"></div>
<div style="position:absolute;left:400px;top:662px;width:958px;height:23px;background:#f0f0f0;border:1px solid #7a7a7a;box-sizing:border-box"></div>
<div style="position:absolute;left:9px;top:697px;width:63px;height:23px;background:#e1e1e1;border:1px solid #adadad;box-sizing:border-box"></div>
<div class="t" style="left:9px;top:701px;width:63px;text-align:center">Import...</div>
<div style="position:absolute;left:82px;top:697px;width:63px;height:23px;background:#e1e1e1;border:1px solid #adadad;box-sizing:border-box"></div>
<div class="t" style="left:82px;top:701px;width:63px;text-align:center">Export</div>
<div style="position:absolute;left:153px;top:697px;width:63px;height:23px;background:#e1e1e1;border:1px solid #adadad;box-sizing:border-box"></div>
<div class="t" style="left:153px;top:701px;width:63px;text-align:center">Clear</div>
<div style="position:absolute;left:227px;top:697px;width:95px;height:23px;background:#e1e1e1;border:1px solid #adadad;box-sizing:border-box"></div>
<div class="t" style="left:227px;top:701px;width:95px;text-align:center">Code Editor...</div>
<div style="position:absolute;left:333px;top:697px;width:95px;height:23px;background:#e1e1e1;border:1px solid #adadad;box-sizing:border-box"></div>
<div class="t" style="left:333px;top:701px;width:95px;text-align:center">Kern Wizard...</div>
<div style="position:absolute;left:985px;top:697px;width:73px;height:23px;background:#e1e1e1;border:1px solid #adadad;box-sizing:border-box"></div>
<div class="t" style="left:985px;top:701px;width:73px;text-align:center">Apply</div>
<div style="position:absolute;left:1087px;top:697px;width:81px;height:23px;background:#e1e1e1;border:1px solid #adadad;box-sizing:border-box"></div>
<div class="t" style="left:1087px;top:701px;width:81px;text-align:center">OK</div>
<div style="position:absolute;left:1180px;top:697px;width:81px;height:23px;background:#e1e1e1;border:1px solid #adadad;box-sizing:border-box"></div>
<div class="t" style="left:1180px;top:701px;width:81px;text-align:center">Cancel</div>
<div style="position:absolute;left:1276px;top:697px;width:81px;height:23px;background:#e1e1e1;border:1px solid #adadad;box-sizing:border-box"></div>
<div class="t" style="left:1276px;top:701px;width:81px;text-align:center">Help</div>
</body></html>
